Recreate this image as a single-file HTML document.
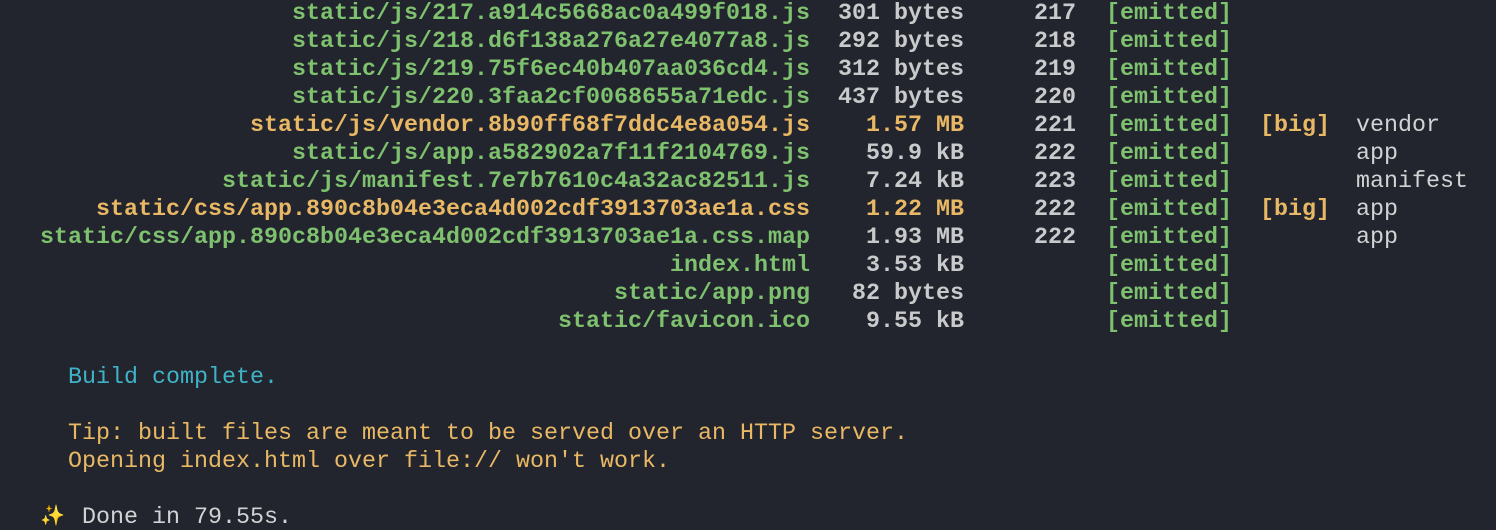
<!DOCTYPE html>
<html><head><style>
html,body{margin:0;padding:0;background:#22252d;width:1496px;height:530px;overflow:hidden}
body{font-family:"Liberation Mono","DejaVu Sans Mono",monospace;font-size:23.33px;position:relative}
.r{position:absolute;height:28px;line-height:28px;white-space:pre;left:0;width:1496px}
.r span{position:absolute;top:0}
.f{right:686px;font-weight:bold}
.s{right:532px;font-weight:bold;color:#c9cacc}
.i{right:420px;font-weight:bold;color:#c9cacc}
.e{left:1106px;font-weight:bold;color:#7ec16e}
.b{left:1260px;font-weight:bold;color:#e9b865}
.n{left:1356px;color:#d2d3d5}
.g{color:#7ec16e}.y{color:#e9b865}
</style></head><body>
<div class="r" style="top:0px"><span class="f g">static/js/217.a914c5668ac0a499f018.js</span><span class="s">301 bytes</span><span class="i">217</span><span class="e">[emitted]</span></div>
<div class="r" style="top:28px"><span class="f g">static/js/218.d6f138a276a27e4077a8.js</span><span class="s">292 bytes</span><span class="i">218</span><span class="e">[emitted]</span></div>
<div class="r" style="top:56px"><span class="f g">static/js/219.75f6ec40b407aa036cd4.js</span><span class="s">312 bytes</span><span class="i">219</span><span class="e">[emitted]</span></div>
<div class="r" style="top:84px"><span class="f g">static/js/220.3faa2cf0068655a71edc.js</span><span class="s">437 bytes</span><span class="i">220</span><span class="e">[emitted]</span></div>
<div class="r" style="top:112px"><span class="f y">static/js/vendor.8b90ff68f7ddc4e8a054.js</span><span class="s y">1.57 MB</span><span class="i">221</span><span class="e">[emitted]</span><span class="b">[big]</span><span class="n">vendor</span></div>
<div class="r" style="top:140px"><span class="f g">static/js/app.a582902a7f11f2104769.js</span><span class="s">59.9 kB</span><span class="i">222</span><span class="e">[emitted]</span><span class="n">app</span></div>
<div class="r" style="top:168px"><span class="f g">static/js/manifest.7e7b7610c4a32ac82511.js</span><span class="s">7.24 kB</span><span class="i">223</span><span class="e">[emitted]</span><span class="n">manifest</span></div>
<div class="r" style="top:196px"><span class="f y">static/css/app.890c8b04e3eca4d002cdf3913703ae1a.css</span><span class="s y">1.22 MB</span><span class="i">222</span><span class="e">[emitted]</span><span class="b">[big]</span><span class="n">app</span></div>
<div class="r" style="top:224px"><span class="f g">static/css/app.890c8b04e3eca4d002cdf3913703ae1a.css.map</span><span class="s">1.93 MB</span><span class="i">222</span><span class="e">[emitted]</span><span class="n">app</span></div>
<div class="r" style="top:252px"><span class="f g">index.html</span><span class="s">3.53 kB</span><span class="e">[emitted]</span></div>
<div class="r" style="top:280px"><span class="f g">static/app.png</span><span class="s">82 bytes</span><span class="e">[emitted]</span></div>
<div class="r" style="top:308px"><span class="f g">static/favicon.ico</span><span class="s">9.55 kB</span><span class="e">[emitted]</span></div>
<div class="r" style="top:364px"><span style="left:68px;color:#3fb3c6">Build complete.</span></div>
<div class="r" style="top:420px"><span style="left:68px;color:#e9b865">Tip: built files are meant to be served over an HTTP server.</span></div>
<div class="r" style="top:448px"><span style="left:68px;color:#e9b865">Opening index.html over file:// won't work.</span></div>
<div class="r" style="top:504px"><span style="left:40px;color:#f3c94a;font-size:20px">✨</span><span style="left:82px;color:#d2d3d5">Done in 79.55s.</span></div>
</body></html>
